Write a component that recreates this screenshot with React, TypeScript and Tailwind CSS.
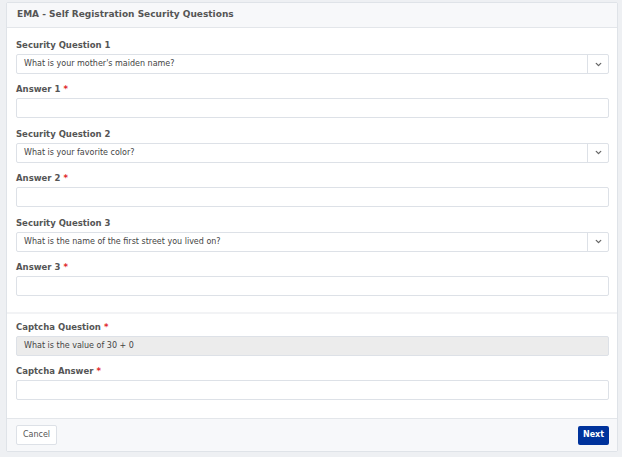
import { ChevronDown } from "lucide-react";

const font = "font-['DejaVu_Sans',Verdana,sans-serif]";

function Label({ text, required }: { text: string; required?: boolean }) {
  return (
    <div className="h-[10px] leading-[10px] mb-[4px] text-[8.5px] font-bold text-[#555555]">
      {text}
      {required && <span className="text-[#e0282b] ml-[3px]">*</span>}
    </div>
  );
}

function SelectBox({ value }: { value: string }) {
  return (
    <div className="h-[20px] w-full flex border border-[#dde1e7] rounded-[2px] bg-white">
      <div className="flex-1 flex items-center pl-[7px] text-[8px] text-[#444444]">{value}</div>
      <div className="w-[21px] flex items-center justify-center border-l border-[#dde1e7]">
        <ChevronDown size={9} strokeWidth={3.5} className="text-[#666666]" />
      </div>
    </div>
  );
}

function TextBox({ value, readOnly }: { value?: string; readOnly?: boolean }) {
  return (
    <div
      className={`h-[20px] w-full flex items-center pl-[7px] border border-[#dde1e7] rounded-[2px] text-[8px] text-[#444444] ${
        readOnly ? "bg-[#ececec]" : "bg-white"
      }`}
    >
      {value}
    </div>
  );
}

const questions = [
  "What is your mother's maiden name?",
  "What is your favorite color?",
  "What is the name of the first street you lived on?",
];

export default function App() {
  return (
    <div className={`w-[622px] h-[457px] bg-[#eef0f3] pt-[2px] pl-[6px] ${font}`}>
      <div className="w-[612px] h-[450px] bg-white border border-[#dfe3e8] rounded-[2px] flex flex-col">
        {/* Header */}
        <div className="h-[25px] bg-[#f7f8fa] border-b border-[#e3e6ea] flex items-center px-[10px]">
          <span className="text-[9px] font-bold text-[#555555]">
            EMA - Self Registration Security Questions
          </span>
        </div>

        {/* Security questions */}
        <div className="pl-[9px] pr-[8px] pt-[12px] pb-[16px] flex flex-col gap-[10.4px]">
          {questions.map((q, i) => (
            <div key={i} className="flex flex-col gap-[10.4px]">
              <div>
                <Label text={`Security Question ${i + 1}`} />
                <SelectBox value={q} />
              </div>
              <div>
                <Label text={`Answer ${i + 1}`} required />
                <TextBox />
              </div>
            </div>
          ))}
        </div>

        {/* Captcha */}
        <div className="border-t-2 border-[#f2f3f5] pl-[9px] pr-[8px] pt-[8px] flex-1 flex flex-col gap-[10.4px]">
          <div>
            <Label text="Captcha Question" required />
            <TextBox value="What is the value of 30 + 0" readOnly />
          </div>
          <div>
            <Label text="Captcha Answer" required />
            <TextBox />
          </div>
        </div>

        {/* Footer */}
        <div className="h-[33px] bg-[#f7f8fa] border-t border-[#e3e6ea] flex items-center justify-between pl-[9px] pr-[8px]">
          <button className="h-[20px] w-[41px] bg-white border border-[#dde1e7] rounded-[2px] text-[8px] text-[#555555]">
            Cancel
          </button>
          <button className="h-[19px] w-[31px] bg-[#00339c] rounded-[2px] text-[8px] font-bold text-white">
            Next
          </button>
        </div>
      </div>
    </div>
  );
}
